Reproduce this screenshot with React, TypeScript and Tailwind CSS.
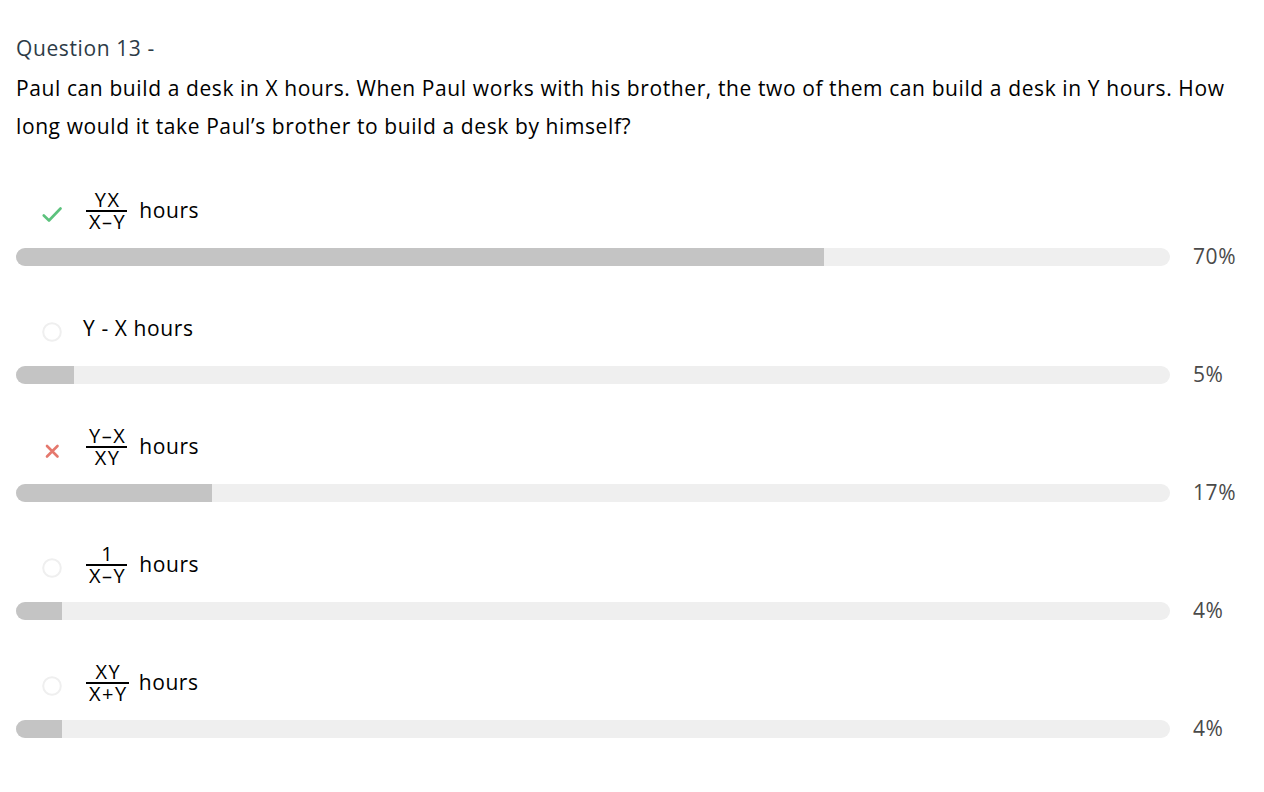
import React from "react";

type Opt = {
  status: "correct" | "wrong" | "none";
  label: React.ReactNode;
  pct: number;
};

function Frac({ num, den }: { num: string; den: string }) {
  return (
    <span className="inline-flex flex-col items-center text-[20px] tracking-[1.5px] text-black">
      <span className="pl-[3px] pr-[1px] leading-[20px]">{num}</span>
      <span className="self-stretch h-[2px] bg-black" />
      <span className="pl-[3px] pr-[1px] leading-[20px]">{den}</span>
    </span>
  );
}

function Icon({ status }: { status: Opt["status"] }) {
  if (status === "correct") {
    return (
      <svg width="20" height="20" viewBox="0 0 20 20" className="translate-y-[2px]">
        <polyline
          points="1.8,12.5 7,17.5 18.5,5.5"
          fill="none"
          stroke="#5cc27d"
          strokeWidth="2.6"
          strokeLinecap="round"
          strokeLinejoin="round"
        />
      </svg>
    );
  }
  if (status === "wrong") {
    return (
      <svg width="20" height="20" viewBox="0 0 20 20" className="translate-y-[5px]">
        <path
          d="M5 4 L15.5 14.5 M15.5 4 L5 14.5"
          fill="none"
          stroke="#e5786d"
          strokeWidth="2.6"
          strokeLinecap="round"
        />
      </svg>
    );
  }
  return (
    <svg width="20" height="20" viewBox="0 0 20 20" className="translate-y-[3px]">
      <circle cx="10" cy="10" r="8.8" fill="none" stroke="#efefef" strokeWidth="2" />
    </svg>
  );
}

const options: Opt[] = [
  {
    status: "correct",
    label: (
      <>
        <Frac num="YX" den="X–Y" />
        <span className="ml-[12px]">hours</span>
      </>
    ),
    pct: 70,
  },
  {
    status: "none",
    label: <span className="-ml-[3px]">Y - X hours</span>,
    pct: 5,
  },
  {
    status: "wrong",
    label: (
      <>
        <Frac num="Y–X" den="XY" />
        <span className="ml-[12px]">hours</span>
      </>
    ),
    pct: 17,
  },
  {
    status: "none",
    label: (
      <>
        <Frac num="1" den="X–Y" />
        <span className="ml-[12px]">hours</span>
      </>
    ),
    pct: 4,
  },
  {
    status: "none",
    label: (
      <>
        <Frac num="XY" den="X+Y" />
        <span className="ml-[10px]">hours</span>
      </>
    ),
    pct: 4,
  },
];

export default function App() {
  return (
    <div
      className="min-h-[792px] bg-white px-4 pt-[34px] tracking-[0.6px]"
      style={{ fontFamily: "'Open Sans', Lato, sans-serif" }}
    >
      <div className="text-[21px] leading-[28px] text-[#2d3b47]">Question 13 -</div>
      <p className="mt-[7px] text-[21px] leading-[38px] text-black">
        Paul can build a desk in X hours. When Paul works with his brother, the two of them can
        build a desk in Y hours. How long would it take Paul’s brother to build a desk by himself?
      </p>
      <div className="mt-[46px] flex flex-col">
        {options.map((o, i) => (
          <div key={i} className="flex flex-col h-[118px]">
            <div className="flex items-center h-[40px]">
              <div className="ml-[26px] w-[20px] h-[20px] flex items-center justify-center">
                <Icon status={o.status} />
              </div>
              <div className="ml-[24px] flex items-center text-[21px] text-black">{o.label}</div>
            </div>
            <div className="mt-[17px] flex items-center h-[18px]">
              <div className="w-[1154px] h-[18px] rounded-full bg-[#efefef] overflow-hidden">
                <div
                  className="h-full bg-[#c4c4c4]"
                  style={{ width: `${o.pct}%` }}
                />
              </div>
              <div className="ml-[23px] text-[21px] text-[#4a4a4a]">{o.pct}%</div>
            </div>
          </div>
        ))}
      </div>
    </div>
  );
}
